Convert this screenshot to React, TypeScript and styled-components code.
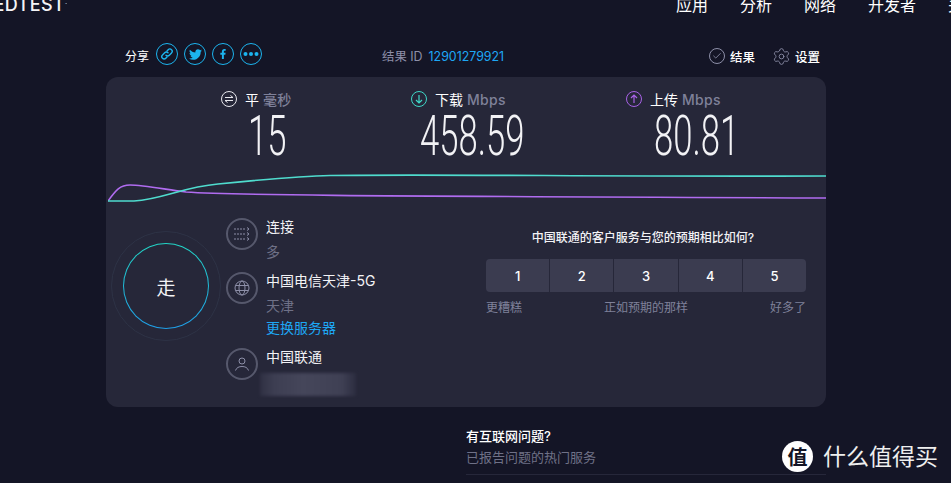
import styled, { createGlobalStyle } from "styled-components";
import { FaTwitter, FaFacebookF } from "react-icons/fa";
import { Settings, Check } from "lucide-react";

const Global = createGlobalStyle`
    html, body {
        margin: 0;
        height: 483px;
        overflow: hidden;
        background: #141526;
        font-family: Inter, "Noto Sans CJK SC", sans-serif;
    }
    * { box-sizing: border-box; }
`;

const Page = styled.div`
    position: relative;
    width: 951px;
    height: 483px;
    overflow: hidden;
    background: #141526;
    color: #fff;
`;

const Header = styled.div`
    display: flex;
    justify-content: space-between;
    align-items: flex-end;
    height: 17px;
    overflow: hidden;
`;

const Logo = styled.div`
    display: flex;
    justify-content: flex-end;
    width: 67px;
    overflow: hidden;
    font-size: 18px;
    line-height: 24px;
    font-weight: 500;
    letter-spacing: 0.4px;
    color: #f4f4f6;
    white-space: nowrap;
`;

const Tm = styled.span`
    font-size: 3px;
    line-height: 24px;
    letter-spacing: 0;
`;

const Nav = styled.div`
    display: flex;
    gap: 32px;
    width: 275px;
    flex-shrink: 0;
    font-size: 16px;
    line-height: 24px;
    white-space: nowrap;
`;

const Main = styled.div`
    width: 720px;
    margin-left: 106px;
`;

const TopBar = styled.div`
    display: flex;
    align-items: center;
    height: 24px;
    margin-top: 25px;
    margin-bottom: 11px;
    font-size: 12.5px;
`;

const Share = styled.div`
    display: flex;
    align-items: center;
    width: 276px;
    padding-left: 19px;
`;

const ShareLabel = styled.span`
    width: 31px;
    margin-top: 2px;
    font-size: 12px;
`;

const ShareIcon = styled.span`
    display: flex;
    align-items: center;
    justify-content: center;
    width: 22px;
    height: 22px;
    margin-right: 6px;
    border-radius: 50%;
    border: 1.5px solid #1cb4ee;
    color: #1cb4ee;
`;

const DotIcon = styled.svg`
    display: block;
`;

const ResultId = styled.div`
    display: flex;
    align-items: baseline;
    gap: 6px;
    flex: 1;
    margin-top: 3px;
    color: #8d8fa8;
    font-size: 12.4px;
`;

const IdValue = styled.span`
    color: #1ea7f5;
`;

const TopLink = styled.span<{ $gap: number; $after: number }>`
    display: flex;
    align-items: center;
    gap: ${(p) => p.$gap}px;
    margin-top: 4px;
    margin-right: ${(p) => p.$after}px;
    font-weight: 500;
`;

const CheckRing = styled.span`
    display: flex;
    align-items: center;
    justify-content: center;
    width: 16px;
    height: 16px;
    border-radius: 50%;
    border: 1px solid #8d8fa8;
    color: #8d8fa8;
`;

const Panel = styled.div`
    height: 330px;
    border-radius: 12px;
    background: #262739;
    overflow: hidden;
`;

const Stats = styled.div`
    display: flex;
    height: 93px;
    padding-top: 13px;
`;

const Stat = styled.div<{ $left: number; $width: number }>`
    width: ${(p) => p.$width}px;
    margin-left: ${(p) => p.$left}px;
    flex-shrink: 0;
`;

const StatHead = styled.div`
    display: flex;
    align-items: center;
    height: 18px;
    font-size: 14px;
    white-space: nowrap;
`;

const StatIcon = styled.span<{ $color: string }>`
    display: flex;
    align-items: center;
    justify-content: center;
    width: 16px;
    height: 16px;
    margin-right: 8px;
    border-radius: 50%;
    border: 1.5px solid ${(p) => p.$color};
    color: ${(p) => p.$color};
`;

const Unit = styled.span`
    margin-left: 4px;
    color: #7f8199;
    font-weight: 500;
    letter-spacing: 0.3px;
`;

const Value = styled.div<{ $indent: number }>`
    margin-left: ${(p) => p.$indent}px;
    margin-top: 4px;
    font-family: Roboto, sans-serif;
    font-size: 55px;
    font-weight: 300;
    line-height: 48px;
    color: #f2f2f5;
    transform: scaleX(0.63);
    transform-origin: left center;
    white-space: nowrap;
`;

const Chart = styled.svg`
    display: block;
    width: 718px;
    height: 40px;
    margin-left: 2px;
    margin-bottom: 7px;
`;

const Lower = styled.div`
    display: flex;
    height: 190px;
`;

const GaugeCol = styled.div`
    display: flex;
    justify-content: center;
    width: 120px;
    flex-shrink: 0;
    padding-top: 14px;
`;

const GaugeOuter = styled.div`
    display: flex;
    align-items: center;
    justify-content: center;
    width: 110px;
    height: 110px;
    border-radius: 50%;
    border: 1px solid #2e3346;
`;

const GaugeInner = styled.div`
    display: flex;
    align-items: center;
    justify-content: center;
    width: 86px;
    height: 86px;
    border-radius: 50%;
    border: 1px solid transparent;
    background: linear-gradient(#262739, #262739) padding-box,
        linear-gradient(#22d6c6, #1f9ee8) border-box;
    font-size: 19px;
    color: #f2f2f5;
`;

const InfoCol = styled.div`
    width: 260px;
    flex-shrink: 0;
`;

const InfoRow = styled.div<{ $gap: number }>`
    display: flex;
    gap: 8px;
    margin-bottom: ${(p) => p.$gap}px;
`;

const InfoIcon = styled.span`
    display: flex;
    align-items: center;
    justify-content: center;
    width: 32px;
    height: 32px;
    flex-shrink: 0;
    border-radius: 50%;
    border: 2px solid #56586c;
    color: #8d8fa8;
    margin-top: 1px;
`;

const InfoText = styled.div`
    font-size: 14px;
    line-height: 24px;
    color: #f2f2f5;
    margin-top: -2px;
`;

const InfoSub = styled.div`
    color: #6f7187;
    line-height: 26px;
`;

const ChangeLink = styled.div`
    color: #1ea7f5;
    line-height: 18px;
`;

const Blurred = styled.div`
    width: 96px;
    height: 23px;
    margin-top: 4px;
    margin-left: -6px;
    background: linear-gradient(90deg, #2f3043, #3d3e52 15%, #45465a 45%, #3f4054 85%, #2c2d40);
    filter: blur(1.5px);
`;

const Survey = styled.div`
    width: 320px;
    padding-top: 12px;
`;

const Question = styled.div`
    padding-right: 6px;
    text-align: center;
    font-size: 12px;
    font-weight: 500;
    line-height: 18px;
    color: #f2f2f5;
`;

const Scale = styled.div`
    display: grid;
    grid-template-columns: repeat(5, 1fr);
    gap: 1px;
    height: 33px;
    margin-top: 12px;
    border-radius: 4px;
    overflow: hidden;
`;

const ScaleBtn = styled.div`
    display: flex;
    align-items: center;
    justify-content: center;
    background: #3b3c50;
    font-size: 13px;
    font-weight: 500;
`;

const ScaleLabels = styled.div`
    display: flex;
    justify-content: space-between;
    margin-top: 7px;
    font-size: 12px;
    line-height: 18px;
    color: #7f8199;
`;

const Issues = styled.div`
    width: 360px;
    margin-left: 360px;
    margin-top: 20px;
    height: 48px;
    border-bottom: 1px solid #26273a;
`;

const IssuesTitle = styled.div`
    font-size: 13px;
    line-height: 18px;
    font-weight: 500;
`;

const IssuesSub = styled.div`
    margin-top: 2px;
    font-size: 13px;
    line-height: 20px;
    color: #6f7187;
`;

const Watermark = styled.div`
    position: absolute;
    left: 782px;
    top: 441px;
    display: flex;
    align-items: center;
    gap: 10px;
    font-size: 23px;
    line-height: 30px;
    color: #eee;
    white-space: nowrap;
`;

const Badge = styled.span`
    display: flex;
    align-items: center;
    justify-content: center;
    width: 31px;
    height: 31px;
    border-radius: 50%;
    background: #fff;
    color: #141526;
    font-family: "Noto Sans CJK SC", sans-serif;
    font-size: 20px;
    font-weight: 700;
`;

export default function App() {
    return (
        <Page>
            <Global />
            <Header>
                <Logo>SPEEDTEST<Tm>™</Tm></Logo>
                <Nav>
                    <span>应用</span>
                    <span>分析</span>
                    <span>网络</span>
                    <span>开发者</span>
                    <span>关于</span>
                </Nav>
            </Header>
            <Main>
                <TopBar>
                    <Share>
                        <ShareLabel>分享</ShareLabel>
                        <ShareIcon>
                            <svg width="14" height="14" viewBox="0 0 14 14" fill="none" stroke="currentColor" strokeWidth="1.4" strokeLinecap="round">
                                <path d="M6 8.300a2.300 2.300 0 0 0 3.300 0l2.200-2.300a2.300 2.300 0 0 0-3.300-3.300L7 3.900" />
                                <path d="M8 5.700a2.300 2.300 0 0 0-3.300 0L2.500 8a2.300 2.300 0 0 0 3.300 3.300L7 10.100" />
                            </svg>
                        </ShareIcon>
                        <ShareIcon><FaTwitter size={13} /></ShareIcon>
                        <ShareIcon><FaFacebookF size={10} /></ShareIcon>
                        <ShareIcon>
                            <DotIcon width="16" height="6" viewBox="0 0 16 6" fill="currentColor">
                                <circle cx="2.500" cy="3" r="2" />
                                <circle cx="8" cy="3" r="2" />
                                <circle cx="13.500" cy="3" r="2" />
                            </DotIcon>
                        </ShareIcon>
                    </Share>
                    <ResultId>
                        <span>结果 ID</span>
                        <IdValue>12901279921</IdValue>
                    </ResultId>
                    <TopLink $gap={5} $after={17}>
                        <CheckRing><Check size={10} /></CheckRing>
                        结果
                    </TopLink>
                    <TopLink $gap={4} $after={6}>
                        <Settings size={19} strokeWidth={1.1} color="#8d8fa8" />
                        设置
                    </TopLink>
                </TopBar>
                <Panel>
                    <Stats>
                        <Stat $left={115} $width={190}>
                            <StatHead>
                                <StatIcon $color="#e8e8ee">
                                    <svg width="10" height="10" viewBox="0 0 10 10" fill="none" stroke="currentColor">
                                        <path d="M1 3.500h8L6.500 1.500M9 6.500H1l2.500 2" />
                                    </svg>
                                </StatIcon>
                                平<Unit>毫秒</Unit>
                            </StatHead>
                            <Value $indent={27}>15</Value>
                        </Stat>
                        <Stat $left={0} $width={215}>
                            <StatHead>
                                <StatIcon $color="#3fd8c8">
                                    <svg width="10" height="10" viewBox="0 0 10 10" fill="none" stroke="currentColor" strokeWidth="1.2">
                                        <path d="M5 1v8M2 6l3 3 3-3" />
                                    </svg>
                                </StatIcon>
                                下载<Unit>Mbps</Unit>
                            </StatHead>
                            <Value $indent={9}>458.59</Value>
                        </Stat>
                        <Stat $left={0} $width={200}>
                            <StatHead>
                                <StatIcon $color="#a862e6">
                                    <svg width="10" height="10" viewBox="0 0 10 10" fill="none" stroke="currentColor" strokeWidth="1.2">
                                        <path d="M5 9V1M2 4l3-3 3 3" />
                                    </svg>
                                </StatIcon>
                                上传<Unit>Mbps</Unit>
                            </StatHead>
                            <Value $indent={28}>80.81</Value>
                        </Stat>
                    </Stats>
                    <Chart viewBox="0 0 718 40" fill="none" strokeWidth="1.6">
                        <path d="M0 31 C8 20 12 15 22 15 C36 15 60 20 78 22 C120 25 220 26 718 28" stroke="#b06cf0" />
                        <path d="M0 31 L26 31 C55 29 75 17 110 14 C150 10 190 6 222 5.500 C350 4 500 7 718 6" stroke="#4fdcce" />
                    </Chart>
                    <Lower>
                        <GaugeCol>
                            <GaugeOuter>
                                <GaugeInner>走</GaugeInner>
                            </GaugeOuter>
                        </GaugeCol>
                        <InfoCol>
                            <InfoRow $gap={6}>
                                <InfoIcon>
                                    <svg width="18" height="14" viewBox="0 0 18 14" fill="none" stroke="currentColor">
                                        <path d="M1 2h12M1 7h12M1 12h12" strokeDasharray="2 1" />
                                        <path d="M14 .5l2 1.500-2 1.500M14 5.500l2 1.500-2 1.500M14 10.500l2 1.500-2 1.500" />
                                    </svg>
                                </InfoIcon>
                                <InfoText>
                                    连接
                                    <InfoSub>多</InfoSub>
                                </InfoText>
                            </InfoRow>
                            <InfoRow $gap={10}>
                                <InfoIcon>
                                    <svg width="16" height="16" viewBox="0 0 16 16" fill="none" stroke="currentColor">
                                        <circle cx="8" cy="8" r="7" />
                                        <ellipse cx="8" cy="8" rx="3" ry="7" />
                                        <path d="M1.500 5.500h13M1.500 10.500h13" />
                                    </svg>
                                </InfoIcon>
                                <InfoText>
                                    中国电信天津-5G
                                    <InfoSub>天津</InfoSub>
                                    <ChangeLink>更换服务器</ChangeLink>
                                </InfoText>
                            </InfoRow>
                            <InfoRow $gap={0}>
                                <InfoIcon>
                                    <svg width="16" height="16" viewBox="0 0 16 16" fill="none" stroke="currentColor">
                                        <circle cx="8" cy="5" r="3" />
                                        <path d="M1.500 14.500c1-3 3.500-4 6.500-4s5.500 1 6.500 4" />
                                    </svg>
                                </InfoIcon>
                                <InfoText>
                                    中国联通
                                    <Blurred />
                                </InfoText>
                            </InfoRow>
                        </InfoCol>
                        <Survey>
                            <Question>中国联通的客户服务与您的预期相比如何?</Question>
                            <Scale>
                                {[1, 2, 3, 4, 5].map((n) => (
                                    <ScaleBtn key={n}>{n}</ScaleBtn>
                                ))}
                            </Scale>
                            <ScaleLabels>
                                <span>更糟糕</span>
                                <span>正如预期的那样</span>
                                <span>好多了</span>
                            </ScaleLabels>
                        </Survey>
                    </Lower>
                </Panel>
                <Issues>
                    <IssuesTitle>有互联网问题?</IssuesTitle>
                    <IssuesSub>已报告问题的热门服务</IssuesSub>
                </Issues>
            </Main>
            <Watermark>
                <Badge>值</Badge>
                什么值得买
            </Watermark>
        </Page>
    );
}
